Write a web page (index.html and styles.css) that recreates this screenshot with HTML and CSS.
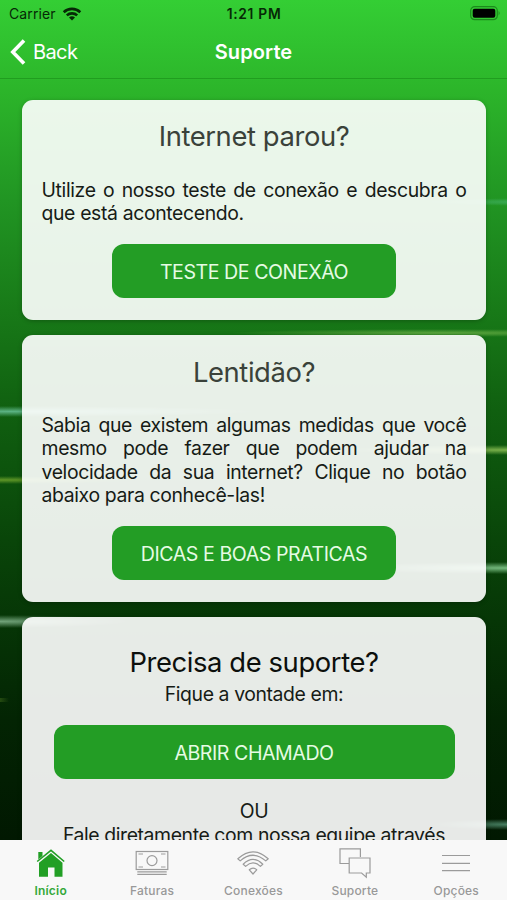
FILE: index.html
```html
<!DOCTYPE html>
<html lang="pt-BR">
<head>
    <meta charset="UTF-8">
    <title>Suporte</title>
    <link rel="stylesheet" href="styles.css">
</head>
<body>
    <div class="app">
        <header class="header">
            <div class="status-bar">
                <div class="carrier">
                    <span>Carrier</span>
                    <svg width="20" height="14" viewBox="0 0 20 14" fill="none" stroke="#062806" stroke-width="2.6">
                        <path d="M1.7 5.2 A12 12 0 0 1 18.3 5.2"/>
                        <path d="M4.8 8.4 A7.6 7.6 0 0 1 15.2 8.4"/>
                        <path d="M10 13.6 L7 10.6 A4.3 4.3 0 0 1 13 10.6 Z" fill="#062806" stroke="none"/>
                    </svg>
                </div>
                <div class="time">1:21 PM</div>
                <div class="battery">
                    <svg width="31" height="15" viewBox="0 0 31 15">
                        <rect x="0.7" y="0.7" width="26.6" height="13" rx="4" fill="none" stroke="#1c8a1c" stroke-width="1.2"/>
                        <rect x="2.7" y="2.7" width="22.6" height="9" rx="2" fill="#000"/>
                        <path d="M28.6 5 Q30.6 7.2 28.6 9.4 Z" fill="#1c8a1c"/>
                    </svg>
                </div>
            </div>
            <div class="nav-bar">
                <a class="back">
                    <svg width="16" height="26" viewBox="0 0 16 26" fill="none" stroke="#fff" stroke-width="3.6">
                        <path d="M14 1.5 L2.8 13 L14 24.5"/>
                    </svg>
                    <span>Back</span>
                </a>
                <h1>Suporte</h1>
            </div>
        </header>

        <main class="content">
            <section class="card">
                <h2>Internet parou?</h2>
                <p>Utilize o nosso teste de conexão e descubra o que está acontecendo.</p>
                <button class="btn">TESTE DE CONEXÃO</button>
            </section>
            <section class="card">
                <h2>Lentidão?</h2>
                <p>Sabia que existem algumas medidas que você mesmo pode fazer que podem ajudar na velocidade da sua internet? Clique no botão abaixo para conhecê-las!</p>
                <button class="btn">DICAS E BOAS PRATICAS</button>
            </section>
            <section class="card card-support">
                <h2>Precisa de suporte?</h2>
                <div class="line">Fique a vontade em:</div>
                <button class="btn btn-wide">ABRIR CHAMADO</button>
                <div class="line">OU</div>
                <div class="line">Fale diretamente com nossa equipe através</div>
            </section>
        </main>

        <nav class="tab-bar">
            <a class="tab active">
                <svg width="36" height="32" viewBox="0 0 36 32" fill="#229f25">
                    <path d="M5.3 4 H9.5 V8 L5.3 11.5 Z"/>
                    <path d="M4.2 13.5 L18 2.4 L31.2 13.5" fill="none" stroke="#229f25" stroke-width="1.6"/>
                    <path d="M6 14.8 L18 5 L29.5 14.8 V28.8 H21.5 V19.5 H15 V28.8 H6 Z"/>
                </svg>
                <span>Início</span>
            </a>
            <a class="tab">
                <svg width="36" height="32" viewBox="0 0 36 32" fill="none" stroke="#9b9b9b" stroke-width="1.2">
                    <rect x="2.2" y="3.5" width="31.6" height="18"/>
                    <circle cx="18" cy="12.6" r="5"/>
                    <path d="M4.5 6 H9 M27 6 H31.5 M4.5 19 H9 M27 19 H31.5"/>
                    <path d="M3.3 23.8 H32.7 M3.3 26.3 H32.7"/>
                </svg>
                <span>Faturas</span>
            </a>
            <a class="tab">
                <svg width="36" height="32" viewBox="0 0 36 32" fill="none" stroke="#9b9b9b" stroke-width="1.2" stroke-linejoin="round">
                    <path d="M2.8 10.8 Q18 -3.2 33.2 10.8 L30.8 12.9 Q18 1.6 5.2 12.9 Z"/>
                    <path d="M8.2 16.2 Q18 6.6 27.8 16.2 L25.4 18.4 Q18 11.4 10.6 18.4 Z"/>
                    <path d="M14.3 21.8 Q18 18.3 21.7 21.8 L18 26 Z"/>
                </svg>
                <span>Conexões</span>
            </a>
            <a class="tab">
                <svg width="36" height="32" viewBox="0 0 36 32" fill="none" stroke="#9b9b9b" stroke-width="1.2">
                    <path d="M12 15.5 H3 V0.8 H23.4 V9"/>
                    <path d="M12.2 10 H33 V25 H29.3 V29.2 L24.6 25 H12.2 Z"/>
                </svg>
                <span>Suporte</span>
            </a>
            <a class="tab">
                <svg width="36" height="32" viewBox="0 0 36 32" stroke="#9b9b9b" stroke-width="1.2">
                    <path d="M4 7.5 H32 M4 15.3 H32 M4 22.7 H32"/>
                </svg>
                <span>Opções</span>
            </a>
        </nav>
    </div>
</body>
</html>
```

FILE: styles.css
```css
* {
    box-sizing: border-box;
}
body {
    margin: 0;
    font-family: Inter, "Liberation Sans", sans-serif;
}
.app {
    display: flex;
    flex-direction: column;
    height: 900px;
    overflow: hidden;
    /* light streaks over the green gradient */
    background:
        radial-gradient(closest-side, rgba(90, 200, 150, 0.5), transparent) 420px 198px / 240px 8px no-repeat,
        radial-gradient(closest-side, rgba(140, 200, 90, 0.6), transparent) 230px 329px / 420px 8px no-repeat,
        radial-gradient(closest-side, rgba(110, 200, 160, 0.8), transparent) -240px 406px / 500px 11px no-repeat,
        radial-gradient(closest-side, rgba(150, 200, 90, 0.8), transparent) 340px 445px / 340px 10px no-repeat,
        radial-gradient(closest-side, rgba(130, 180, 50, 0.7), transparent) -130px 476px / 260px 8px no-repeat,
        radial-gradient(closest-side, rgba(130, 200, 140, 0.9), transparent) 340px 562px / 340px 12px no-repeat,
        radial-gradient(closest-side, rgba(140, 190, 150, 0.8), transparent) -130px 615px / 260px 13px no-repeat,
        linear-gradient(90deg, rgba(70, 110, 30, 0.5), transparent) left 698px / 9px 4px no-repeat,
        radial-gradient(closest-side, rgba(80, 140, 110, 0.9), transparent) 430px 819px / 160px 11px no-repeat,
        linear-gradient(#34ce34 0, #2cb52a 90px, #219523 200px, #187a18 310px, #106010 410px, #094509 540px, #063606 620px, #032403 720px, #011801 840px);
}
.header {
    height: 79px;
    border-bottom: 1px solid rgba(0, 90, 0, 0.28);
}
.status-bar {
    display: grid;
    grid-template-columns: 1fr auto 1fr;
    align-items: center;
    height: 27px;
    padding: 0 6px 0 9px;
    font-size: 14px;
    letter-spacing: 0.1px;
    color: #062806;
}
.carrier {
    display: flex;
    align-items: center;
    gap: 6px;
}
.time {
    margin-right: 2px;
    font-size: 13.8px;
    font-weight: 600;
    letter-spacing: 0.7px;
}
.battery {
    display: flex;
    justify-content: flex-end;
}
.nav-bar {
    display: grid;
    grid-template-columns: 1fr auto 1fr;
    align-items: center;
    height: 50px;
    padding: 0 10px;
    color: #fff;
}
.back {
    display: flex;
    align-items: center;
    gap: 7px;
    font-size: 20px;
    letter-spacing: -0.6px;
}
.nav-bar h1 {
    margin: 0;
    font-size: 20px;
    font-weight: 600;
    letter-spacing: 0.1px;
}
.content {
    flex: 1;
    min-height: 0;
    overflow: hidden;
    display: flex;
    flex-direction: column;
    gap: 15px;
    padding: 21px 21px 0 22px;
}
.card {
    flex: none;
    display: flex;
    flex-direction: column;
    align-items: center;
    padding: 19.4px 19.5px 22px;
    border-radius: 11px;
    background: rgba(255, 255, 255, 0.905);
    box-shadow: 0 1px 4px rgba(0, 0, 0, 0.25);
    color: #161b16;
}
.card h2 {
    margin: 0 0 25.4px;
    font-size: 27.4px;
    font-weight: 400;
    line-height: 34px;
    letter-spacing: -0.4px;
    color: #3a423a;
}
.card p {
    align-self: stretch;
    margin: 0 0 18.8px;
    font-size: 19.4px;
    line-height: 23.2px;
    letter-spacing: -0.36px;
    text-align: justify;
}
.btn {
    width: 284px;
    height: 54.5px;
    padding: 1px 0 0;
    border: none;
    border-radius: 12px;
    background: #239d25;
    font-family: inherit;
    font-size: 19.6px;
    letter-spacing: -0.45px;
    color: #e6fbe4;
}
.btn-wide {
    width: 401px;
    margin: 19px 0 20px;
}
.card-support {
    padding-top: 28px;
}
.card-support h2 {
    margin-bottom: 2.5px;
    color: #0c0f0c;
}
.line {
    font-size: 19.4px;
    line-height: 24px;
    letter-spacing: -0.4px;
    white-space: nowrap;
}
.tab-bar {
    display: grid;
    grid-template-columns: repeat(5, 1fr);
    height: 60px;
    background: #f8f8f8;
}
.tab {
    display: flex;
    flex-direction: column;
    align-items: center;
    padding-top: 8px;
    font-size: 12px;
    font-weight: 500;
    line-height: 16px;
    letter-spacing: 0.2px;
    color: #999;
}
.tab span {
    margin-top: 3px;
}
.active {
    font-weight: 600;
    color: #35a83a;
}
```
